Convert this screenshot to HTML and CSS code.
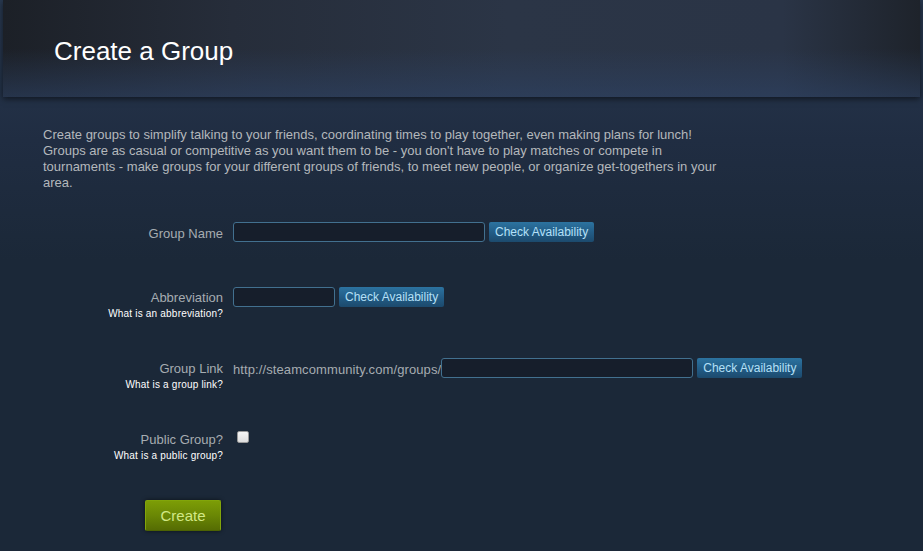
FILE: index.html
```html
<!DOCTYPE html>
<html lang="en">
<head>
    <meta charset="UTF-8">
    <title>Create a Group</title>
    <link rel="stylesheet" href="styles.css">
</head>
<body>
    <div class="page-header">
        <h1>Create a Group</h1>
    </div>

    <div class="content">
        <p class="intro">Create groups to simplify talking to your friends, coordinating times to play together, even making plans for lunch! Groups are as casual or competitive as you want them to be - you don't have to play matches or compete in tournaments - make groups for your different groups of friends, to meet new people, or organize get-togethers in your area.</p>

        <form class="group-form" onsubmit="return false;">
            <div class="form-row first">
                <div class="label-col">
                    <label for="groupName">Group Name</label>
                </div>
                <div class="field-col">
                    <input type="text" id="groupName" class="text-input wide">
                    <button type="button" class="check-btn">Check Availability</button>
                </div>
            </div>

            <div class="form-row">
                <div class="label-col">
                    <label for="abbreviation">Abbreviation</label>
                    <a class="help-link" href="#">What is an abbreviation?</a>
                </div>
                <div class="field-col">
                    <input type="text" id="abbreviation" class="text-input short">
                    <button type="button" class="check-btn">Check Availability</button>
                </div>
            </div>

            <div class="form-row">
                <div class="label-col">
                    <label for="groupLink">Group Link</label>
                    <a class="help-link" href="#">What is a group link?</a>
                </div>
                <div class="field-col">
                    <span class="url-prefix">http://steamcommunity.com/groups/</span><input type="text" id="groupLink" class="text-input wide">
                    <button type="button" class="check-btn">Check Availability</button>
                </div>
            </div>

            <div class="form-row">
                <div class="label-col">
                    <label for="publicGroup">Public Group?</label>
                    <a class="help-link" href="#">What is a public group?</a>
                </div>
                <div class="field-col top">
                    <input type="checkbox" id="publicGroup" class="check">
                </div>
            </div>

            <div class="form-row submit-row">
                <div class="label-col">
                    <button type="submit" class="create-btn">Create</button>
                </div>
            </div>
        </form>
    </div>
</body>
</html>
```

FILE: styles.css
```css
/* base */
* {
    margin: 0;
    padding: 0;
    box-sizing: border-box;
}

body {
    font-family: Arial, "Liberation Sans", Helvetica, sans-serif;
    background: linear-gradient(to bottom, #28384f 0, #202d42 140px, #1b2838 260px, #1b2838 100%);
    color: #b6babe;
    width: 923px;
    height: 551px;
    overflow: hidden;
}

/* header bar */
.page-header {
    margin: 0 3px;
    height: 97px;
    display: flex;
    align-items: center;
    padding: 6px 0 0 51px;
    background:
        linear-gradient(to bottom, rgba(40, 58, 86, 0) 50%, rgba(46, 68, 104, 0.55) 100%),
        linear-gradient(to right, #1c2027 0, #262d3a 25%, #2b3546 55%, #2a3446 85%, #1e232b 100%);
    box-shadow: 0 2px 6px rgba(0, 0, 0, 0.55);
}

.page-header h1 {
    font-size: 26px;
    font-weight: normal;
    color: #ffffff;
}

/* content */
.content {
    padding: 30px 0 0 43px;
}

.intro {
    font-size: 13px;
    line-height: 16px;
    max-width: 685px;
    color: #b4b8bc;
    margin-bottom: 31px;
}

/* form rows */
.form-row {
    display: flex;
    gap: 10px;
    min-height: 30px;
    margin-bottom: 39px;
}

.form-row.first {
    min-height: 20px;
    margin-bottom: 41px;
}

.label-col {
    width: 180px;
    display: flex;
    flex-direction: column;
    align-items: flex-end;
    text-align: right;
}

.label-col label {
    font-size: 13px;
    line-height: 22px;
    color: #a6acb1;
}

.first .label-col label {
    line-height: 24px;
}

.help-link {
    font-size: 10px;
    line-height: 10px;
    color: #ffffff;
    text-decoration: none;
    letter-spacing: 0.2px;
}

.field-col {
    display: flex;
    align-items: center;
    height: 20px;
}

.field-col.top {
    align-items: flex-start;
}

.url-prefix {
    font-size: 13px;
    color: #a6acb1;
    margin-top: 3px;
    letter-spacing: 0.1px;
}

/* inputs */
.text-input {
    height: 20px;
    background: #161e2b;
    border: 1px solid #42708f;
    border-radius: 3px;
    color: #ffffff;
    font-size: 12px;
    padding: 0 4px;
    outline: none;
}

.text-input.wide {
    width: 252px;
}

.text-input.short {
    width: 102px;
}

.check-btn {
    margin-left: 4px;
    height: 20px;
    padding: 0 6px;
    font-family: Arial, "Liberation Sans", sans-serif;
    font-size: 12px;
    color: #b4e0f8;
    background: linear-gradient(to bottom, #2c73a0 0, #235d87 50%, #1c4a6d 100%);
    border: none;
    border-radius: 2px;
    cursor: pointer;
}

.check-btn:hover {
    color: #ffffff;
}

.check {
    appearance: none;
    margin: 2px 0 0 4px;
    width: 12px;
    height: 12px;
    background: linear-gradient(to bottom, #f6f6f6 0, #dedede 100%);
    border: 1px solid #9a9a9a;
    border-radius: 2px;
}

/* create button */
.submit-row {
    margin-bottom: 0;
}

.create-btn {
    margin-right: 2px;
    width: 76px;
    height: 31px;
    font-family: Arial, "Liberation Sans", sans-serif;
    font-size: 15px;
    color: #d2e885;
    background: linear-gradient(to bottom, #7c9d06 0, #6a8705 50%, #556c03 100%);
    border: 1px solid #82a50a;
    border-bottom-color: #4d6303;
    border-radius: 2px;
    box-shadow: 0 0 4px rgba(0, 0, 0, 0.6);
    cursor: pointer;
}

.create-btn:hover {
    color: #ffffff;
}
```
